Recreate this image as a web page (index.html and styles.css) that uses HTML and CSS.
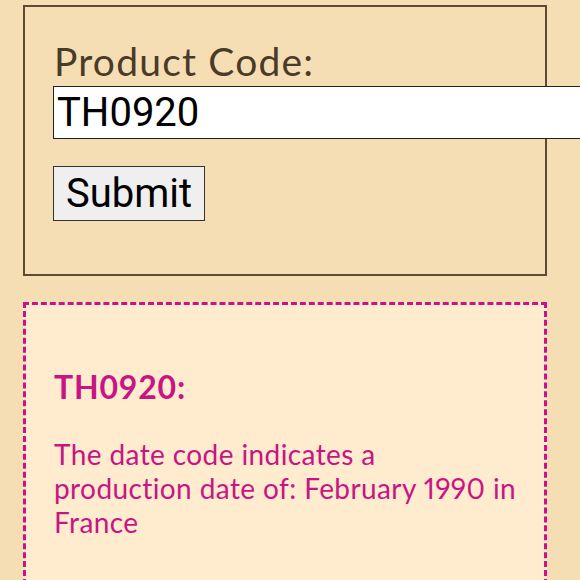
FILE: index.html
```html
<!DOCTYPE html>
<html>
<head>
<meta charset="utf-8">
<link rel="stylesheet" href="styles.css">
</head>
<body>
<form class="lookup">
  <label class="lookup-label" for="code">Product Code:</label>
  <input class="lookup-input" id="code" type="text" value="TH0920">
  <button class="lookup-btn" type="button">Submit</button>
</form>
<section class="result">
  <h3 class="result-title">TH0920:</h3>
  <p class="result-text">The date code indicates a production date of: February 1990 in France</p>
</section>
</body>
</html>
```
FILE: styles.css
```css
html, body {
  overflow-x: hidden;
}
body {
  margin: 0;
  padding: 5px 33px 0 23px;
  background: #f5deb3;
  font-family: Lato, "Noto Sans", sans-serif;
}
.lookup {
  display: flex;
  flex-direction: column;
  align-items: flex-start;
  border: 2px solid #5c4a32;
  padding: 30px 0 53px 28px;
}
.lookup-label {
  font-size: 39px;
  line-height: 48px;
  letter-spacing: 1.2px;
  color: #4a3a28;
  margin-left: 1px;
}
.lookup-input {
  margin-top: 1px;
  width: 560px;
  box-sizing: border-box;
  height: 53px;
  font-family: Roboto, sans-serif;
  font-size: 40px;
  padding: 1px 3px;
  border: 1px solid #222;
  background: #fff;
  color: #000;
}
.lookup-btn {
  margin-top: 27px;
  font-family: Roboto, sans-serif;
  font-size: 40px;
  height: 55px;
  padding: 0 12px;
  border: 1px solid #333;
  background: #efefef;
  color: #000;
}
.result {
  margin-top: 26px;
  border: 3px dashed #c71585;
  background: #ffebcd;
  padding: 62px 20px 40px 28px;
  color: #c71585;
  min-height: 300px;
}
.result-title {
  margin: 0;
  font-size: 32px;
  line-height: 40px;
  letter-spacing: 0.8px;
  font-weight: 700;
}
.result-text {
  margin: 30px 0 0;
  max-width: 463px;
  font-size: 28px;
  line-height: 34px;
  letter-spacing: 0.4px;
  font-variant-numeric: proportional-nums;
}
```
